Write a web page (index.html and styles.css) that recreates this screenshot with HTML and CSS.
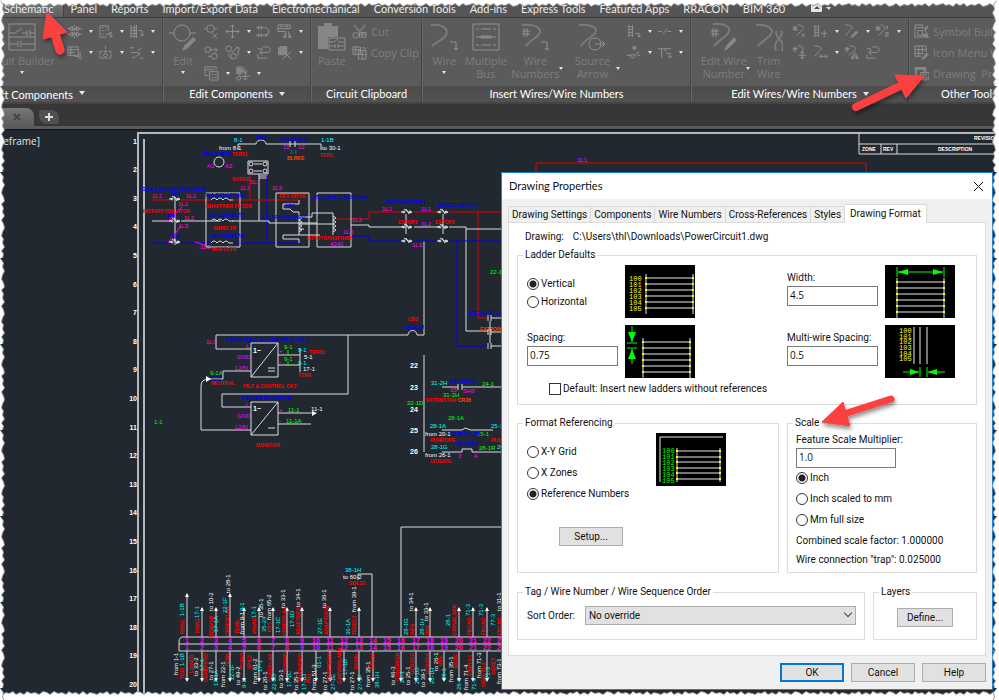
FILE: index.html
```html
<!DOCTYPE html>
<html lang="en">
<head>
<meta charset="utf-8">
<title>Drawing Properties</title>
<link rel="stylesheet" href="styles.css">
</head>
<body>
<svg class="defs" aria-hidden="true">
  <defs>
    <symbol id="i-builder" viewBox="0 0 28 28"><path d="M1 1h26v26H1zM1 14h26M1 10h6l7-5M14 10h5M19 7v6M22 7v6M22 10h5M1 21h8M10 18v6M13 18v6M14 21h13"/></symbol>
    <symbol id="i-comp" viewBox="0 0 16 16"><path d="M0 5h5M11 5h5M0 11h5M11 11h5M6 3v4M10 3v4M6 9v4M10 9v4M8 1v2M8 5v2M8 9v2M8 13v2"/><circle cx="5" cy="5" r="2"/><circle cx="11" cy="5" r="2"/><circle cx="5" cy="11" r="2"/><circle cx="11" cy="11" r="2"/></symbol>
    <symbol id="i-panel" viewBox="0 0 16 16"><path d="M2 2h9v5M2 2v12h7M4 4h2M8 4h1M4 7h2M8 7h1M4 11h2M8 11h4V9h2v5M12 12l2 2 2-2"/></symbol>
    <symbol id="i-rail" viewBox="0 0 16 16"><path d="M2 1v14M6 1v14M8 1v14M2 4h6M2 7h6M2 10h6M2 13h6M10 7h4v6M12 11l2 2 2-2"/></symbol>
    <symbol id="i-table" viewBox="0 0 16 16"><path d="M1 2h11v9H1zM1 5h11M1 8h7M4 2v9M8 12h6V7M11 12l3 3 2-3"/></symbol>
    <symbol id="i-loc" viewBox="0 0 16 16"><path d="M2 7v7h12V7M2 7h3M11 7h3M8 1v7M6 6l2 2 2-2" stroke-dasharray="3 1"/><circle cx="8" cy="11" r="2"/></symbol>
    <symbol id="i-contact" viewBox="0 0 16 16"><path d="M1 3h5M9 6l5-3M5 8h6v3M3 13h4l3-3M12 14h3M2 8h3" stroke-dasharray="4 1"/></symbol>
    <symbol id="i-edit" viewBox="0 0 28 28"><circle cx="13" cy="10" r="8"/><path d="M0 10h5M21 10h6"/><path class="solid" d="M24 14l3 3-9 9-5 2 2-5z"/></symbol>
    <symbol id="i-del" viewBox="0 0 16 16"><circle cx="7" cy="5" r="4"/><path d="M0 5h3M11 5h3M9 10l5 5M14 10l-5 5"/></symbol>
    <symbol id="i-move" viewBox="0 0 16 16"><path d="M8 1v14M1 8h14M6 3l2-2 2 2M6 13l2 2 2-2M3 6L1 8l2 2M13 6l2 2-2 2"/></symbol>
    <symbol id="i-scoot" viewBox="0 0 16 16"><path d="M0 4h8M0 12h10M3 2v4M6 2v4M3 10v4M6 10v4M9 4c6 0 6 8 1 8M12 10l-2 2 2 2"/></symbol>
    <symbol id="i-align" viewBox="0 0 16 16"><path d="M1 1h13v4H1zM1 8h8M3 3h3M8 3h4M1 5v3"/><path class="solid" d="M6 15l4-8v8zM12 7l4 8h-4z"/></symbol>
    <symbol id="i-copy" viewBox="0 0 16 16"><circle cx="4" cy="5" r="3"/><circle cx="11" cy="12" r="3"/><path d="M7 5h7M12 3l2 2-2 3M4 12h4"/></symbol>
    <symbol id="i-swap" viewBox="0 0 16 16"><circle cx="4" cy="4" r="3"/><circle cx="9" cy="12" r="3"/><path d="M7 8l7-6M14 6v5M12 3h3v3M4 9c0 4 2 5 3 5"/></symbol>
    <symbol id="i-back" viewBox="0 0 16 16"><path d="M7 2h5c4 0 4 6 0 6H5M7 5L4 8l3 3M2 10v4h10M2 4h4v2"/></symbol>
    <symbol id="i-tools" viewBox="0 0 16 16"><path class="solid" d="M1 3l3-2h7v8l-2 2H1z"/><path d="M6 15l9-8M8 8l7 7"/></symbol>
    <symbol id="i-list" viewBox="0 0 16 16"><path d="M1 1h12v3M1 1v9h4M1 4h10M6 6h9v9H6zM8 9h2M11 9h3M8 12h2M11 12h3"/></symbol>
    <symbol id="i-tag" viewBox="0 0 16 16"><path d="M2 1h6l5 5M2 1v8M5 4h3l3 3"/><path class="solid" d="M2 2h5l3 3-5 5-3-2z"/><path d="M11 6v9M6 11h10M9 8l2-2 2 2M9 13l2 2 2-2"/><circle cx="4" cy="13" r="2"/></symbol>
    <symbol id="i-paste" viewBox="0 0 28 28"><path class="solid" d="M0 3h6V0h8v3h6v11H10v12H0z"/><path d="M11 15h16v12H11zM11 19h5l4-3M20 19h7M11 23h6M17 21v4M20 21v4M20 23h7"/></symbol>
    <symbol id="i-cut" viewBox="0 0 16 16"><path class="thick" d="M2 1l6 7M14 1L8 8"/><circle cx="4" cy="12" r="3"/><path d="M8 9h7v5H8zM8 11h7M11 9v5"/></symbol>
    <symbol id="i-clip" viewBox="0 0 16 16"><path d="M1 2h8v8H1zM1 5h8M4 2v8M7 6h8v9H7zM7 10h8M11 6v9M11 3h3v3"/></symbol>
    <symbol id="i-wire" viewBox="0 0 28 28"><path class="thick" d="M1 2c12-1 18 4 15 10-2 4-8 6-14 11"/><path d="M20 19h6v8M24 25l2 2 2-2"/></symbol>
    <symbol id="i-bus" viewBox="0 0 28 28"><path d="M1 1h26v26H1zM4 6h3M9 6h10M21 6h3M4 14h20M4 22h3M9 22h10M21 22h3"/><path d="M9 13h10v2H9z"/></symbol>
    <symbol id="i-wirenum" viewBox="0 0 28 28"><path d="M3 5v9M6 5v9M1 8h8M1 11h8M20 19h6v8M24 25l2 2 2-2"/><path class="thick" d="M1 2c14-1 21 4 17 9-2 4-9 6-13 12"/></symbol>
    <symbol id="i-source" viewBox="0 0 28 28"><path class="thick" d="M1 2c12-1 20 3 16 8-2 4-10 6-14 13"/><circle cx="17" cy="21" r="6"/><path d="M17 21h10M24 18l3 3-3 3"/></symbol>
    <symbol id="i-ladder" viewBox="0 0 16 16"><path d="M3 1v13M7 1v13M3 3h4M3 6h4M3 9h4M3 12h4M10 10h4v4M12 12l2 2 2-2"/></symbol>
    <symbol id="i-gap" viewBox="0 0 16 16"><path d="M1 8h4M6 11l5-6M11 8h4"/></symbol>
    <symbol id="i-tee" viewBox="0 0 16 16"><path d="M1 4h14M5 4v10M9 4v3M10 9h4v5M12 12l2 2 2-2"/></symbol>
    <symbol id="i-node" viewBox="0 0 16 16"><path class="solid" d="M7 1h4v4H7z"/><path d="M1 11h4M9 11l5-4M12 11h3"/><circle cx="7" cy="12" r="2"/></symbol>
    <symbol id="i-editnum" viewBox="0 0 28 28"><path d="M3 5v9M6 5v9M1 8h8M1 11h8"/><path class="thick" d="M3 1c13-1 19 4 15 9-2 4-8 6-14 13"/><path class="solid" d="M24 14l3 3-9 9-4 2 2-5z"/></symbol>
    <symbol id="i-trim" viewBox="0 0 28 28"><path class="thick" d="M1 2c12-1 18 4 15 9-2 4-8 6-13 12M22 8c-3 3 1 4 2 9M26 8c3 3-1 4-2 9M24 16c-5 4-4 8-3 12M24 16c5 4 4 8 3 12"/></symbol>
    <symbol id="i-numx" viewBox="0 0 16 16"><path d="M2 2v5M4 2v5M1 4h5M1 6h5M6 1c8 0 7 5 3 7l-4 4M10 10l4 4M14 10l-4 4"/></symbol>
    <symbol id="i-numseq" viewBox="0 0 16 16"><path d="M2 2v5M4 2v5M1 4h5M1 6h5M6 1c6 0 6 5 2 7l-4 4M12 3l1-1v4M11 9h3v2h-3v2h4"/></symbol>
    <symbol id="i-ladplus" viewBox="0 0 16 16"><path d="M2 1v13M6 1v13M2 3h4M2 6h4M2 9h4M2 12h4M8 10h7M12 7v7"/></symbol>
    <symbol id="i-wedit" viewBox="0 0 16 16"><path d="M1 1c9 0 9 4 5 6l-4 5"/><path class="solid" d="M13 7l2 2-5 5-3 1 1-3z"/></symbol>
    <symbol id="i-nummove" viewBox="0 0 16 16"><path d="M2 2v5M4 2v5M1 4h5M6 1c8 0 7 5 3 7M11 7v8M7 11h8M9 9l2-2 2 2M9 13l2 2 2-2"/></symbol>
    <symbol id="i-wstretch" viewBox="0 0 16 16"><path d="M1 1c9 0 9 4 5 6l-4 5M7 12h8M9 10l-2 2 2 2M13 10l2 2-2 2"/></symbol>
    <symbol id="i-numflip" viewBox="0 0 16 16"><path d="M2 2v5M4 2v5M1 4h5M6 1c8 0 7 5 3 7l-4 3"/><path class="solid" d="M7 15l4-8v8zM12 7l4 8h-4z"/></symbol>
    <symbol id="i-symbol" viewBox="0 0 16 16"><path d="M1 1h8v3M1 1v13h8M1 4h8M4 7h5v5H4zM10 4l4 6M14 2l1 3M11 14h5"/><path class="solid" d="M9 10h6v4H9zM11 3h3v3h-3z"/></symbol>
    <symbol id="i-menu" viewBox="0 0 16 16"><path d="M1 1h12v7M1 1v11h7M1 5h12M1 9h9M5 1v11M9 1v9"/><path class="solid" d="M13 8l3 2-5 5-3 1 1-3z"/></symbol>
    <symbol id="i-props" viewBox="0 0 16 16"><path class="solid" d="M1 1h12v5h-3V4H3v10H1z"/><path d="M7 7h9v7H7zM9 9h5M9 12h5M9 15h5"/></symbol>

    <g id="rungs"><path d="M0 0v40M47 0v40M0 4h47M0 10h47M0 16h47M0 22h47M0 28h47M0 34h47" stroke="#e8e8e8" fill="none"/><path d="M0 3v2M0 9v2M0 15v2M0 21v2M0 27v2M0 33v2M47 3v2M47 9v2M47 15v2M47 21v2M47 27v2M47 33v2" stroke="#ff0" stroke-width="2"/></g>
    <g id="nc"><path class="w" d="M0 0h3M8 0h3M3-3l6 4M5-3l3 5M1-1l2 2M9-1l2 2"/><circle cx="3" r="1" class="w"/><circle cx="9" r="1" class="w"/></g>

    <pattern id="tear-h" width="94" height="10" patternUnits="userSpaceOnUse"><path fill="#999" d="M0 0H94V5L90 6 87 4 83 7 79 4 76 6 72 5 69 7 66 4 62 6 58 5 54 7 50 4 47 6 43 7 39 4 35 6 31 5 27 7 24 4 20 6 16 4 13 7 9 5 6 6 3 4 0 5z"/><path fill="#fff" d="M0 0H94V4L90 5 87 3 83 6 79 3 76 5 72 4 69 6 66 3 62 5 58 4 54 6 50 3 47 5 43 6 39 3 35 5 31 4 27 6 24 3 20 5 16 3 13 6 9 4 6 5 3 3 0 4z"/></pattern>
    <pattern id="tear-v" width="10" height="86" patternUnits="userSpaceOnUse"><path fill="#999" d="M0 0V86H3L4 82 2 79 5 75 3 71 4 67 2 64 3 60 5 56 4 52 2 48 5 44 3 40 4 36 2 32 5 29 4 25 2 21 3 17 5 13 3 9 4 5 2 2z"/><path fill="#fff" d="M0 0V86H2L3 82 1 79 4 75 2 71 3 67 1 64 2 60 4 56 3 52 1 48 4 44 2 40 3 36 1 32 4 29 3 25 1 21 2 17 4 13 2 9 3 5 1 2z"/></pattern>
    <filter id="soft" x="-30%" y="-30%" width="160%" height="160%"><feDropShadow dx="1" dy="3" stdDeviation="2" flood-color="#000" flood-opacity=".45"/></filter>
  </defs>
</svg>

<div class="app">
  <nav class="tabs">
    <a class="tab current" href="#">Schematic</a><a class="tab" href="#">Panel</a><a class="tab" href="#">Reports</a><a class="tab" href="#">Import/Export Data</a><a class="tab" href="#">Electromechanical</a><a class="tab" href="#">Conversion Tools</a><a class="tab" href="#">Add-ins</a><a class="tab" href="#">Express Tools</a><a class="tab" href="#">Featured Apps</a><a class="tab" href="#">RRACON</a><a class="tab" href="#">BIM 360</a>
    <button class="ribbon-toggle" aria-label="Minimize ribbon"><svg width="20" height="8" viewBox="0 0 20 8"><rect width="11" height="8" rx="1" fill="#e4e4e4"/><path d="M3 5l3-3 3 3z" fill="#555"/><path d="M15 3h5l-2 3z" fill="#ddd"/></svg></button>
  </nav>

  <div class="ribbon">
    <section class="panel">
      <div class="tools">
        <button class="big cut-left"><svg class="icon-l"><use href="#i-builder"/></svg><span>Circuit Builder</span><i class="caret"></i></button>
        <div class="smalls">
          <div><button class="sm" aria-label="Icon menu"><svg><use href="#i-comp"/></svg><i class="caret"></i></button><button class="sm" aria-label="Panel list"><svg><use href="#i-panel"/></svg><i class="caret"></i></button><button class="sm" aria-label="Terminal"><svg><use href="#i-rail"/></svg><i class="caret"></i></button></div>
          <div><button class="sm" aria-label="PLC"><svg><use href="#i-table"/></svg><i class="caret"></i></button><button class="sm" aria-label="Location"><svg><use href="#i-loc"/></svg><i class="caret"></i></button><button class="sm" aria-label="Multiple insert"><svg><use href="#i-contact"/></svg><i class="caret"></i></button></div>
        </div>
      </div>
      <h2 class="first">Insert Components<i class="caret wide"></i></h2>
    </section>
    <section class="panel">
      <div class="tools">
        <button class="big"><svg class="icon-l"><use href="#i-edit"/></svg><span>Edit</span><i class="caret"></i></button>
        <div class="smalls">
          <div><button class="sm bare" aria-label="Delete"><svg><use href="#i-del"/></svg></button><button class="sm" aria-label="Move"><svg><use href="#i-move"/></svg><i class="caret"></i></button><button class="sm bare" aria-label="Scoot"><svg><use href="#i-scoot"/></svg></button><button class="sm" aria-label="Align"><svg><use href="#i-align"/></svg><i class="caret"></i></button></div>
          <div><button class="sm bare" aria-label="Copy"><svg><use href="#i-copy"/></svg></button><button class="sm" aria-label="Swap"><svg><use href="#i-swap"/></svg><i class="caret"></i></button><button class="sm bare" aria-label="Reverse"><svg><use href="#i-back"/></svg></button><button class="sm" aria-label="Utilities"><svg><use href="#i-tools"/></svg><i class="caret"></i></button></div>
          <div><button class="sm" aria-label="Catalog"><svg><use href="#i-list"/></svg><i class="caret"></i></button><button class="sm" aria-label="Attributes"><svg><use href="#i-tag"/></svg><i class="caret"></i></button></div>
        </div>
      </div>
      <h2>Edit Components<i class="caret wide"></i></h2>
    </section>
    <section class="panel">
      <div class="tools">
        <button class="big narrow"><svg class="icon-l"><use href="#i-paste"/></svg><span>Paste</span></button>
        <div class="rows"><button class="row"><svg><use href="#i-cut"/></svg>Cut</button><button class="row"><svg><use href="#i-clip"/></svg>Copy Clip</button></div>
      </div>
      <h2>Circuit Clipboard</h2>
    </section>
    <section class="panel">
      <div class="tools">
        <button class="big"><svg class="icon-l"><use href="#i-wire"/></svg><span>Wire</span><i class="caret"></i></button>
        <button class="big"><svg class="icon-l"><use href="#i-bus"/></svg><span>Multiple<br>Bus</span></button>
        <button class="big mid"><svg class="icon-l"><use href="#i-wirenum"/></svg><span>Wire<br>Numbers</span><i class="caret side"></i></button>
        <button class="big mid"><svg class="icon-l"><use href="#i-source"/></svg><span>Source<br>Arrow</span><i class="caret side"></i></button>
        <div class="smalls">
          <div><button class="sm" aria-label="Ladder"><svg><use href="#i-ladder"/></svg><i class="caret"></i></button><button class="sm" aria-label="Gap"><svg><use href="#i-gap"/></svg><i class="caret"></i></button></div>
          <div><button class="sm" aria-label="Node"><svg><use href="#i-node"/></svg><i class="caret"></i></button><button class="sm" aria-label="Tee"><svg><use href="#i-tee"/></svg><i class="caret"></i></button></div>
        </div>
      </div>
      <h2>Insert Wires/Wire Numbers</h2>
    </section>
    <section class="panel">
      <div class="tools">
        <button class="big mid"><svg class="icon-l"><use href="#i-editnum"/></svg><span>Edit Wire<br>Number</span><i class="caret side"></i></button>
        <button class="big slim"><svg class="icon-l"><use href="#i-trim"/></svg><span>Trim<br>Wire</span></button>
        <div class="smalls">
          <div><button class="sm bare" aria-label="Delete numbers"><svg><use href="#i-numx"/></svg></button><button class="sm" aria-label="Revise ladder"><svg><use href="#i-ladplus"/></svg><i class="caret"></i></button><button class="sm" aria-label="Edit wire"><svg><use href="#i-wedit"/></svg><i class="caret"></i></button><button class="sm" aria-label="Wire sequence"><svg><use href="#i-numseq"/></svg><i class="caret"></i></button></div>
          <div><button class="sm bare" aria-label="Move number"><svg><use href="#i-nummove"/></svg></button><button class="sm" aria-label="Stretch wire"><svg><use href="#i-wstretch"/></svg><i class="caret"></i></button><button class="sm bare" aria-label="Flip number"><svg><use href="#i-numflip"/></svg></button><button class="sm bare" aria-label="Toggle"><svg><use href="#i-back"/></svg></button></div>
        </div>
      </div>
      <h2>Edit Wires/Wire Numbers<i class="caret wide"></i></h2>
    </section>
    <section class="panel">
      <div class="tools">
        <div class="rows"><button class="row"><svg><use href="#i-symbol"/></svg>Symbol Builder</button><button class="row"><svg><use href="#i-menu"/></svg>Icon Menu Wizard</button><button class="row"><svg><use href="#i-props"/></svg>Drawing&nbsp; Properties</button></div>
      </div>
      <h2 class="last">Other Tools</h2>
    </section>
  </div>

  <div class="files">
    <div class="file"><button aria-label="Close drawing"><svg width="8" height="8" viewBox="0 0 8 8"><path d="M1 1l6 6M7 1L1 7" stroke="#444" stroke-width="2"/></svg></button></div>
    <button class="add" aria-label="New drawing"><svg width="8" height="8" viewBox="0 0 8 8"><path d="M4 0v8M0 4h8" stroke="#ddd" stroke-width="2"/></svg></button>
  </div>

  <main class="canvas">
    <span class="view-label">[-][Top][2D Wireframe]</span>
    <svg class="drawing" id="drawing">
      <g id="sheet" transform="translate(0 -129)">
        <path class="frame" d="M138 700V133H1200M144 700V139"/>
        <path class="w" d="M859 133V154H1200M859 144H1200M881 144V154M897 144V154"/>
        <g class="t5 white"><text x="974" y="140">REVISIONS</text><text x="862" y="151">ZONE</text><text x="883" y="151">REV</text><text x="938" y="151">DESCRIPTION</text></g>

        <!-- control breaker -->
        <path class="w" d="M238 144h18a5 4 0 0 1 10 0h55M238 144v6M321 144v6M290 141v6M295 141v6"/>
        <g class="t6 cyan"><text x="234" y="142">8-1</text><text x="321" y="142">1-1B</text></g>
        <g class="t6 white"><text x="219" y="150">from 8-1</text><text x="322" y="150">to 30-1</text></g>
        <g class="t5 red"><text x="232" y="156">TER31</text><text x="320" y="157">TER1</text></g>
        <g class="t5 blue"><text x="256" y="140">CB1</text><text x="279" y="141">CR2-SURGE</text><text x="202" y="156">CR2-SURGE</text><text x="142" y="191">DISC3-ROTARY ISOLATOR</text></g>
        <text class="t5 orange" x="287" y="160">BLRKE</text><text class="t5 teal" x="290" y="154">2-1</text>
        <g class="t6 magenta"><text x="283" y="149">11</text><text x="298" y="149">12</text><text x="207" y="168">A1</text><text x="225" y="168">A2</text></g>
        <circle class="w" cx="219" cy="162" r="5"/>

        <!-- surge unit -->
        <path class="w" d="M248 161h20v13h-20zM254 164h8M254 171h8M259 174v47M259 176h8v-3M259 178h8"/>
        <g class="w"><circle cx="251" cy="164" r="2"/><circle cx="265" cy="164" r="2"/><circle cx="251" cy="171" r="2"/><circle cx="265" cy="171" r="2"/></g>
        <path class="r" d="M250 174v26"/><path class="b" d="M267 174v69"/>
        <text class="t5 red" x="232" y="181">SURGE</text>
        <g class="t6 magenta"><text x="240" y="190">1L1</text><text x="250" y="184">1L2</text><text x="272" y="190">1L3</text><text x="152" y="198">1L1</text><text x="186" y="198">1L1</text><text x="178" y="206">1L2</text><text x="184" y="220">1L2</text><text x="178" y="228">1L3</text><text x="200" y="249">1L3</text></g>

        <!-- supply lines -->
        <path class="r" d="M152 200h18M181 200h30M233 200h66M337 219h32v-7h34M414 212h25M449 212h52M478 212v106h10"/>
        <path class="w" d="M152 221h18M181 221h40M232 221h37v2h48M351 225h18v2h34M414 227h25M449 227h17v104h22M466 229h35M424 241v94"/>
        <path class="b" d="M152 243h18M181 243h33M233 243h66M337 236h32v5h34M414 241h25M449 241h52M457 241v105h31"/>
        <path class="w" d="M211 200q3-4 6 0q3-4 6 0q3-4 6 0h4M211 221q3-4 6 0q3-4 6 0q3-4 6 0h4M211 243q3-4 6 0q3-4 6 0q3-4 6 0h4M175 197v48"/>
        <path class="m" d="M168 221l14-14M168 243l13-17M195 242l10 3"/>
        <use href="#nc" x="169" y="199"/><use href="#nc" x="169" y="221"/><use href="#nc" x="169" y="242"/>
        <path class="w" d="M206 193h34v54h-34zM276 193h33v54h-33zM317 193h34v54h-34z"/>
        <path class="w" d="M299 200v4h-16v5h7l3 3h6v23h-16v4h16v4M299 217h13v-4h21M299 224h34M299 235h21M299 229h5M333 213v22M333 216l3 2-3 2 3 2-3 2 3 2-3 2 3 2-3 2M299 216l3 2-3 2 3 2-3 2 3 2-3 2 3 2-3 2"/>
        <g class="t5 blue"><text x="171" y="196">30A</text><text x="166" y="217">30A</text><text x="171" y="238">30A</text><text x="205" y="197">FL1-SCHAFFNER</text><text x="209" y="217">X6-CONNFLTR</text><text x="209" y="238">X6-CONNFLTR</text><text x="261" y="219">ATC1-PHPH 300HZ</text><text x="285" y="208">ATC</text><text x="312" y="199">ATC4-AUTOTRNSFRMR</text></g>
        <g class="t5 red"><text x="206" y="208">SHAFFNER FILTER</text><text x="213" y="230">SHRFLTR</text><text x="211" y="251">WIRFFLTR</text><text x="279" y="198">REV DRIVE</text><text x="143" y="213">ROTARY ISOLATOR</text><text x="306" y="240">AUTOTRANSFORM</text></g>
        <g class="t6 magenta"><text x="352" y="222">1L2</text><text x="343" y="234">1L3</text><text x="382" y="211">1L1</text><text x="421" y="211">1L1</text><text x="421" y="226">1L2</text><text x="412" y="247">1L3</text><text x="577" y="162">1L1</text><text x="330" y="246">4242</text></g>

        <!-- emergency stops -->
        <use href="#nc" x="401" y="212"/><use href="#nc" x="401" y="227"/><use href="#nc" x="401" y="241"/><use href="#nc" x="437" y="212"/><use href="#nc" x="437" y="227"/><use href="#nc" x="437" y="241"/>
        <path class="w" d="M406 214v20M443 214v20"/>
        <g class="t5 blue"><text x="386" y="204">DISC3A-ESTOP1</text><text x="438" y="207">DISC22-ESTOP2</text><text x="468" y="315">ATC28-CXT22</text><text x="403" y="329">CXCCSR</text></g>
        <g class="t5 red"><text x="398" y="224">ESTOP1</text><text x="435" y="224">ESTOP2</text><text x="408" y="321">CB3</text></g>
        <text class="t5 orange" x="480" y="331">EXTPOINT</text>
        <path class="r" d="M536 172v-9h330v10"/>
        <text class="t6 green" x="490" y="274">22-1</text>
        <path class="w" d="M488 315v6M491 315v6M488 329v6M491 329v6M488 343v6M491 343v6M491 318h10M491 332h10M491 346h10M490 321v22"/>

        <!-- power supplies -->
        <path class="w" d="M424 335h-7a4 4 0 0 0-9 0H216v14h35M348 335v59H222v13h29M251 371h-28v8h-14q-8 0-8 7v44h50M251 343h27v34h-27zM278 343l-27 34M251 402h27v33h-27zM278 402l-27 33M268 368h7M268 371h7M268 428h7M278 355h22M278 365h22M300 348v24M278 413h34M278 424h33"/>
        <path class="white" d="M312 411l5 2-5 3zM206 376l5 3-5 3z"/>
        <path class="b" d="M211 377h10M211 380h10"/>
        <g class="t6 blue"><text x="225" y="341">PWS9-PILZ &amp; CONTROL CKT</text><text x="241" y="400">PWS10-MONITOR</text></g>
        <g class="t6 magenta"><text x="206" y="344">1L3</text><text x="246" y="348">L</text><text x="237" y="359">GND</text><text x="235" y="370">L2/N</text><text x="246" y="407">L</text><text x="237" y="418">GND</text><text x="235" y="429">L2/N</text><text x="279" y="353">+</text><text x="279" y="364">-</text><text x="279" y="412">+</text><text x="279" y="423">-</text></g>
        <g class="t6 green"><text x="284" y="349">9-1</text><text x="284" y="361">9-1</text><text x="210" y="375">9-1A</text><text x="154" y="424">1-1</text><text x="288" y="412">11-1</text><text x="286" y="423">11-1A</text></g>
        <path class="g" d="M288 350v5M288 361v5"/>
        <g class="t6 cyan"><text x="298" y="352">9-1</text><text x="298" y="365">9-1</text></g>
        <g class="t6 white"><text x="304" y="359">5-1</text><text x="303" y="371">17-1</text><text x="311" y="411">11-1</text></g>
        <g class="t7 white"><text x="253" y="353">1~</text><text x="253" y="411">1~</text></g>
        <g class="t5 red"><text x="309" y="354">TER31</text><text x="298" y="377">TER9</text><text x="211" y="385">NEUTRAL</text><text x="243" y="388">PILZ &amp; CONTROL CKT</text><text x="256" y="447">MONITOR</text></g>

        <!-- right-hand ladder -->
        <path class="w" d="M424 355v97M442 387h16M462 387h39M458 384v6M462 384v6M442 430h20l3-2 6 2h22M442 452h20v-3h10v3h29"/>
        <g class="t7 white"><text x="410" y="368">22</text><text x="410" y="390">23</text><text x="410" y="412">24</text><text x="410" y="433">25</text><text x="410" y="454">26</text></g>
        <g class="t6 cyan"><text x="431" y="385">31-2H</text><text x="430" y="428">28-1A</text><text x="431" y="449">28-1G</text><text x="491" y="428">25-1</text><text x="497" y="449">26</text></g>
        <g class="t6 green"><text x="482" y="386">24-1</text><text x="443" y="397">31-2H</text><text x="407" y="405">22-1D</text><text x="448" y="420">28-1A</text><text x="477" y="436">25-1</text><text x="479" y="450">28-1R</text></g>
        <g class="t5 blue"><text x="449" y="383">EXTERNAL</text><text x="449" y="436">UCNROLLER</text><text x="456" y="446">UCNJOG</text></g>
        <g class="t6 magenta"><text x="450" y="392">15</text><text x="463" y="393">SH3</text><text x="458" y="458">3</text><text x="474" y="458">4</text></g>
        <g class="t6 white"><text x="425" y="436">from 20-1</text><text x="425" y="457">from 26-1</text></g>
        <g class="t5 red"><text x="426" y="402">EXTRNSTAN</text><text x="430" y="442">RUNROPE</text><text x="430" y="463">UCNJOG</text><text x="491" y="442">RUN</text></g>
        <text class="t5 orange" x="458" y="402">CR28</text>

        <!-- terminal strip -->
        <path class="w" d="M1200 637H183q-4 0-4 5v9H1200M179 644H1200M372 637v-63h-14v6M401 637v-110H1200"/>
        <text class="t6 cyan" x="345" y="572">38-1H</text><text class="t6 white" x="343" y="579">to 60-2</text><text class="t5 red" x="349" y="585">SOLS1</text>
      </g>
    </svg>

    <form class="dialog" role="dialog" aria-labelledby="dlg-title">
      <header><h1 id="dlg-title">Drawing Properties</h1><button type="button" class="close" aria-label="Close"><svg width="9" height="9" viewBox="0 0 9 9"><path d="M0 0l9 9M9 0L0 9" stroke="#111"/></svg></button></header>
      <div class="dlg-tabs" role="tablist"><button type="button" role="tab">Drawing Settings</button><button type="button" role="tab">Components</button><button type="button" role="tab">Wire Numbers</button><button type="button" role="tab">Cross-References</button><button type="button" role="tab">Styles</button><button type="button" role="tab" aria-selected="true" class="on">Drawing Format</button></div>
      <div class="page">
        <p class="path"><span>Drawing:</span><span>C:\Users\thl\Downloads\PowerCircuit1.dwg</span></p>
        <fieldset class="ladder">
          <legend>Ladder Defaults</legend>
          <div class="ladder-grid">
            <div class="dirs"><label><input type="radio" name="dir" checked>Vertical</label><label><input type="radio" name="dir">Horizontal</label></div>
            <svg class="thumb" viewBox="0 0 70 53"><rect width="70" height="53"/><use href="#rungs" x="21" y="9"/><g class="nums"><text x="4" y="16">100</text><text x="4" y="22">101</text><text x="4" y="28">102</text><text x="4" y="34">103</text><text x="4" y="40">104</text><text x="4" y="46">105</text></g></svg>
            <span></span>
            <div class="field"><label for="width">Width:</label><input id="width" type="text" value="4.5"></div>
            <svg class="thumb" viewBox="0 0 70 53"><rect width="70" height="53"/><use href="#rungs" x="12" y="13"/><path class="gl" d="M12 2v10M59 2v10M13 7h45"/><path class="gf" d="M13 7l10-3v6zM58 7l-10-3v6z"/></svg>
            <div class="field"><label for="spacing">Spacing:</label><input id="spacing" type="text" value="0.75"></div>
            <svg class="thumb" viewBox="0 0 70 53"><rect width="70" height="53"/><use href="#rungs" x="18" y="13"/><path class="gl" d="M7 1v16M2 18h10M2 23h10M7 24v15"/><path class="gf" d="M7 17L3 7h8zM7 24l-4 10h8z"/></svg>
            <span></span>
            <div class="field"><label for="multi">Multi-wire Spacing:</label><input id="multi" type="text" value="0.5"></div>
            <svg class="thumb" viewBox="0 0 70 53"><rect width="70" height="53"/><path d="M29 2v37M35 2v37M42 2v37" stroke="#e8e8e8"/><g class="nums"><text x="14" y="8">100</text><text x="14" y="14">101</text><text x="14" y="19">102</text><text x="14" y="25">103</text><text x="14" y="31">104</text><text x="14" y="36">105</text></g><path class="gl" d="M35 42v10M42 42v10M18 47h16M43 47h17"/><path class="gf" d="M34 47l-9-3v6zM43 47l9-3v6z"/></svg>
          </div>
          <label class="check"><input type="checkbox">Default: Insert new ladders without references</label>
        </fieldset>
        <div class="pair">
          <fieldset class="format">
            <legend>Format Referencing</legend>
            <div class="format-top">
              <div class="radios"><label><input type="radio" name="ref">X-Y Grid</label><label><input type="radio" name="ref">X Zones</label><label><input type="radio" name="ref" checked>Reference Numbers</label></div>
              <svg class="thumb" viewBox="0 0 70 53"><rect width="70" height="53"/><path d="M4 49V4h63" stroke="#e8e8e8" fill="none"/><path d="M21 15v34M64 15v34M21 18h43M21 24h43M21 29h43M21 35h43M21 40h43M21 46h43" stroke="#e8e8e8"/><path d="M21 17v2M21 23v2M21 28v2M21 34v2M21 39v2M21 45v2M64 17v2M64 23v2M64 28v2M64 34v2M64 39v2M64 45v2" stroke="#ff0" stroke-width="2"/><g class="nums lime"><text x="6" y="20">100</text><text x="6" y="26">101</text><text x="6" y="32">102</text><text x="6" y="38">103</text><text x="6" y="44">104</text><text x="6" y="50">105</text></g></svg>
            </div>
            <button type="button" class="btn setup">Setup...</button>
          </fieldset>
          <fieldset class="scale">
            <legend>Scale</legend>
            <div class="field"><label for="mult">Feature Scale Multiplier:</label><input id="mult" type="text" value="1.0"></div>
            <div class="radios"><label><input type="radio" name="unit" checked>Inch</label><label><input type="radio" name="unit">Inch scaled to mm</label><label><input type="radio" name="unit">Mm full size</label></div>
            <p>Combined scale factor: 1.000000</p>
            <p>Wire connection "trap": 0.025000</p>
          </fieldset>
        </div>
        <div class="pair bottom">
          <fieldset>
            <legend>Tag / Wire Number / Wire Sequence Order</legend>
            <div class="sort"><label for="sort">Sort Order:</label><span class="select"><select id="sort"><option>No override</option></select></span></div>
          </fieldset>
          <fieldset class="layers"><legend>Layers</legend><button type="button" class="btn define">Define...</button></fieldset>
        </div>
      </div>
      <footer><button type="button" class="btn ok">OK</button><button type="button" class="btn">Cancel</button><button type="button" class="btn">Help</button></footer>
    </form>
  </main>

  <svg class="arrows" aria-hidden="true">
    <g filter="url(#soft)" fill="#fb4141" stroke="#fb4141">
      <path d="M55 34l5 16" stroke-width="9" stroke-linecap="round"/><path d="M47 12l20 20-24 7z"/>
      <path d="M856 107l42-20" stroke-width="8" stroke-linecap="round"/><path d="M924 76l-29-1 11 23z"/>
      <path d="M891 399l-44 14" stroke-width="7" stroke-linecap="round"/><path d="M822 422l21-20 7 24z"/>
    </g>
  </svg>
  <svg class="tear top"><rect width="100%" height="10" fill="url(#tear-h)"/></svg>
  <svg class="tear bot"><rect width="100%" height="10" fill="url(#tear-h)"/></svg>
  <svg class="tear left"><rect width="10" height="100%" fill="url(#tear-v)"/></svg>
  <svg class="tear right"><rect width="10" height="100%" fill="url(#tear-v)"/></svg>
</div>
<script src="drawing.js"></script>
</body>
</html>
```

FILE: styles.css
```css
* { box-sizing: border-box; }
html, body { height: 100%; }
body { margin: 0; background: #fff; font-family: "Open Sans", "Noto Sans", sans-serif; font-size: 11px; overflow: hidden; }
button { font: inherit; color: inherit; background: none; border: 0; padding: 0; margin: 0; }
h1, h2, p { margin: 0; font-weight: normal; }
.defs { position: absolute; width: 0; height: 0; }

.app { position: relative; min-height: 100vh; display: flex; flex-direction: column; overflow: hidden; background: #212830; }

/* ribbon */
.tabs { display: flex; height: 18px; background: #555; border-bottom: 1px solid #3c3c3c; color: #ececec; white-space: nowrap; font-family: Lato, "Open Sans", sans-serif; }
.tab { color: inherit; text-decoration: none; line-height: 18px; padding: 0 7px; }
.tab.current { background: linear-gradient(#777, #606060); padding: 0 9px 0 4px; border-right: 1px solid #444; }
.ribbon-toggle { margin: 4px 0 0 19px; line-height: 0; align-self: flex-start; }
.ribbon { display: grid; grid-template-columns: 163px 148px 111px 269px 218px 1fr; height: 86px; background: #5b5b5b; border-bottom: 2px solid #444; }
.panel { display: flex; flex-direction: column; min-width: 0; overflow: hidden; border-right: 1px solid #444; border-left: 1px solid #666; }
.tools { flex: 1; display: flex; padding: 5px 2px 0; color: #7e7e7e; white-space: nowrap; }
.panel h2 { height: 16px; line-height: 15px; font-family: Lato, "Open Sans", sans-serif; font-size: 11px; text-align: center; color: #fff; background: linear-gradient(#4c4c4c, #525252); white-space: nowrap; }
.panel h2.first { display: flex; justify-content: flex-end; align-items: center; padding-right: 77px; }
.panel h2.last { text-align: left; padding-left: 31px; }
.tools svg { fill: none; stroke: #929292; stroke-width: 1; overflow: visible; }
.solid { fill: #868686; stroke: none; }
.thick { stroke-width: 2; stroke: #7b7b7b; }
.icon-l { width: 28px; height: 28px; }
.big { display: flex; flex-direction: column; align-items: center; width: 40px; position: relative; line-height: 13px; }
.big .icon-l { margin-bottom: 3px; flex: none; }
.big span { text-align: center; }
.big.cut-left { width: 62px; }
.big.cut-left .icon-l { margin-right: 22px; }
.big.cut-left span { margin-left: -29px; }
.big.cut-left .caret { margin-right: 22px; }
.big.narrow { width: 36px; }
.big.mid { width: 57px; }
.big.slim { width: 38px; }
.panel:nth-child(4) .tools { gap: 2px; }
.panel:nth-child(5) .tools { gap: 2px; padding-left: 6px; }
.caret { display: inline-block; width: 0; height: 0; border: 2px solid transparent; border-top: 3px solid #e6e6e6; border-bottom: 0; }
.big .caret { margin-top: 4px; }
.big .caret.side { position: absolute; right: 0; top: 40px; }
.caret.wide { border-width: 3px 3px 0; border-top-width: 4px; margin: 0 0 2px 6px; }
.smalls { padding-left: 4px; }
.smalls > div { display: flex; height: 21px; }
.sm { display: flex; align-items: center; gap: 7px; width: 31px; height: 16px; }
.sm.bare { width: 21px; }
.sm svg, .row svg { width: 15px; height: 15px; flex: none; }
.rows { display: flex; flex-direction: column; gap: 5px; padding-left: 2px; }
.row { display: flex; align-items: center; gap: 4px; height: 16px; }
.panel:last-child { border-right: 0; }

.files { display: flex; gap: 5px; align-items: flex-end; height: 25px; background: #373737; border-bottom: 3px solid #5a5a5a; box-shadow: 0 1px #111; }
.file { width: 34px; height: 18px; border-radius: 0 8px 0 0; background: linear-gradient(#777, #5a5a5a); text-align: center; line-height: 18px; }
.add { width: 20px; height: 14px; margin-bottom: 2px; border-radius: 3px 8px 3px 8px; background: #505050; line-height: 0; }

/* drawing area */
.canvas { position: relative; flex: 1; min-height: 571px; }
.view-label { position: absolute; left: 40px; top: 5px; transform: translateX(-100%); color: #e4e4e4; white-space: nowrap; font-size: 10px; }
.drawing { position: absolute; inset: 0; width: 100%; height: 100%; font-family: "Liberation Sans", sans-serif; }
.frame { fill: none; stroke: #b4b8bc; stroke-width: 2; }
.w, .r, .b, .m, .g { fill: none; stroke: #dcdcdc; stroke-width: 1; }
.r { stroke: #e00000; } .b { stroke: #0000f0; } .m { stroke: #f0f; } .g { stroke: #0e0; }
.t5 { font-size: 5px; } .t6 { font-size: 6px; } .t7 { font-size: 7px; }
.t5, .t7, .blue { font-weight: bold; }
.white { fill: #fff; } .red { fill: #ff0000; } .blue { fill: #0000ff; } .cyan { fill: #00ffff; } .magenta { fill: #ff00ff; } .green { fill: #00ff00; } .orange { fill: #ff4800; } .teal { fill: #008080; }

/* dialog */
.dialog { position: absolute; left: 501px; right: 6px; top: 43px; background: #f0f0f0; border: 1px solid #1883d7; color: #111; font-family: Roboto, "Liberation Sans", sans-serif; font-size: 10px; line-height: 14px; }
.dialog header { display: flex; justify-content: space-between; align-items: center; height: 26px; padding: 0 9px 0 7px; background: #fff; }
.dialog h1 { font-family: Lato, "Open Sans", sans-serif; font-size: 11px; }
.close { line-height: 0; }
.dlg-tabs { display: flex; align-items: flex-end; padding: 5px 6px 0; }
.dlg-tabs button { height: 16px; padding: 0 3px; border: 1px solid #d9d9d9; border-width: 1px 1px 0 0; background: #f0f0f0; white-space: nowrap; }
.dlg-tabs button:first-child { border-left-width: 1px; }
.dlg-tabs .on { height: 19px; margin-bottom: -1px; padding: 0 5px; background: #fff; }
.page { margin: 0 6px; padding: 7px 8px 15px; background: #fff; border: 1px solid #dcdcdc; }
.path { display: flex; gap: 9px; padding-left: 8px; margin-bottom: 4px; }
fieldset { margin: 0; padding: 0; border: 1px solid #dcdcdc; min-width: 0; }
legend { margin-left: 5px; padding: 0 2px; }
.ladder-grid { display: grid; grid-template-columns: 91px 70px 1fr 91px 70px; gap: 7px; padding: 3px 21px 0 9px; }
.thumb { width: 70px; height: 53px; display: block; }
.nums { font: 7px "Liberation Mono", monospace; fill: #ff0; }
.nums.lime { fill: #0f0; }
.gl { stroke: #0f0; fill: none; } .gf { fill: #0f0; }
.field { display: flex; flex-direction: column; padding-top: 6px; }
.dialog input[type="text"] { width: 100%; height: 20px; margin: 1px 0 0; padding: 0 2px 2px; border: 1px solid #7a7a7a; background: #fff; color: #111; font: 10px "Open Sans", sans-serif; }
.dialog label { display: flex; align-items: center; white-space: nowrap; }
.dialog input[type="radio"], .dialog input[type="checkbox"] { appearance: none; width: 12px; height: 12px; margin: 0 2px 0 0; border: 1px solid #333; background: #fff; flex: none; }
.dialog input[type="radio"] { border-radius: 50%; }
.dialog input[type="radio"]:checked { background: radial-gradient(#222 3px, #fff 4px); }
.dirs { display: flex; flex-direction: column; gap: 4px; padding-top: 12px; }
.dialog .check { margin: 4px 0 8px 31px; }
.pair { display: grid; grid-template-columns: 1fr 190px; gap: 8px; margin-top: 11px; }
.format-top { display: flex; gap: 27px; padding: 3px 9px 0; }
.radios { display: flex; flex-direction: column; gap: 7px; }
.format .radios { padding-top: 12px; }
.btn { height: 19px; border: 1px solid #adadad; background: #e1e1e1; width: 64px; }
.setup { display: block; margin: 26px 0 26px 41px; }
.scale { padding-left: 8px; }
.scale legend { margin-left: -3px; }
.scale .field { width: 100px; padding-top: 3px; }
.scale .radios { padding: 3px 0 7px; }
.scale p + p { margin-top: 5px; }
.bottom { grid-template-columns: 1fr 104px; margin-top: 12px; }
.sort { display: flex; align-items: center; gap: 10px; padding: 7px 8px 14px 9px; }
.select { position: relative; flex: 1; }
.select::after { content: ""; position: absolute; right: 5px; top: 4px; width: 5px; height: 5px; border: solid #444; border-width: 0 1px 1px 0; transform: rotate(45deg); }
select { appearance: none; display: block; width: 100%; height: 19px; padding: 0 3px; border: 1px solid #adadad; border-radius: 0; background: #e1e1e1; color: #111; font: inherit; }
.define { display: block; width: 56px; margin: 9px auto 0; }
.dialog footer { display: flex; justify-content: flex-end; gap: 7px; padding: 7px 6px; }
.dialog .ok { border: 2px solid #0078d7; }

/* callouts and torn edge */
.arrows { position: absolute; inset: 0; width: 100%; height: 100%; pointer-events: none; }
.tear { position: absolute; pointer-events: none; }
.top { top: 0; left: 0; width: 100%; height: 10px; }
.bot { bottom: 2px; left: 0; width: 100%; height: 10px; transform: scaleY(-1); box-shadow: 0 -3px #fff; }
.left { left: 0; top: 0; width: 10px; height: 100%; }
.right { right: 2px; top: 0; width: 10px; height: 100%; transform: scaleX(-1); box-shadow: -2px 0 #fff; }
```

FILE: drawing.js
```js
const NS = "http://www.w3.org/2000/svg";
const sheet = document.getElementById("sheet");

function add(tag, attrs, text) {
  const el = document.createElementNS(NS, tag);
  for (const k in attrs) el.setAttribute(k, attrs[k]);
  if (text !== undefined) el.textContent = text;
  sheet.appendChild(el);
}

// zone numbers down the left margin
for (let n = 1; n <= 20; n++) {
  add("text", { class: "t7 white", x: 137, y: Math.round(115 + n * 28.6), "text-anchor": "end" }, n);
}

const colour = { r: "red", c: "cyan", w: "white" };
const termX = n => Math.round(173 + n * 14.28);

for (let n = 1; n <= 23; n++) {
  for (const y of [643, 650]) add("text", { class: "t7 magenta", x: termX(n), y, "text-anchor": "middle" }, n);
}

// vertical leads: terminal, top end
[[1, 594], [2, 608], [3, 608], [4, 594], [5, 608], [6, 608], [7, 608], [8, 608], [9, 608], [11, 608], [13, 608], [17, 608], [18, 608], [20, 608], [21, 608], [22, 608]].forEach(([n, y]) => {
  add("path", { class: "w", d: `M${termX(n)} 637V${y}` });
  add("path", { class: "white", d: `M${termX(n) - 2} ${y + 3}h4l-2-4z` });
});
[1, 2, 3, 4, 5, 6, 7, 8, 9, 10, 11, 12, 13, 14, 16, 17, 18, 19, 20, 21, 22].forEach(n => {
  add("path", { class: "w", d: `M${termX(n)} 651V680` });
  add("path", { class: "white", d: `M${termX(n) - 2} 678h4l-2 4z` });
});

// rotated labels: x, lower end, colour, text
[
  [184, 634, "r", "RISN1"], [184, 616, "c", "1-1B"], [199, 633, "r", "KISN1"], [199, 618, "c", "17-1"],
  [213, 637, "r", "REMVSB"], [213, 611, "w", "to 10-2"], [218, 632, "c", "17-1A"],
  [229, 636, "r", "GEREW1-B1"], [227, 613, "c", "22-1F"], [230, 593, "w", "to 28-1"],
  [239, 634, "r", "TERB"], [244, 634, "w", "from 9-1"], [244, 611, "c", "9-1"],
  [256, 634, "r", "WIVAR"], [256, 618, "c", "17-1"], [263, 617, "w", "to 35-1"],
  [266, 632, "c", "35-24"], [271, 632, "r", "KP1"], [271, 620, "w", "from 65-2"],
  [280, 633, "c", "17-1C"], [286, 636, "r", "GEREPS-A2"], [285, 608, "w", "to 33-1"],
  [294, 627, "c", "17-1D"], [300, 635, "r", "ADAPTER21"], [300, 607, "w", "to 34-1"],
  [322, 634, "c", "27-1E"], [328, 635, "r", "ADAPTER22"], [326, 608, "w", "to 36-1"],
  [350, 635, "c", "36-1A"], [356, 635, "r", "TERB13"], [356, 612, "w", "from 39-1"],
  [408, 635, "c", "28-1G"], [414, 635, "r", "INFS"], [413, 611, "w", "to 34-1"],
  [424, 635, "c", "28-1H"], [429, 635, "r", "IRIS"], [428, 621, "w", "to 33-1"],
  [450, 626, "c", "28-1"], [456, 636, "r", "GARVALARN"], [470, 616, "c", "71-3"], [471, 635, "r", "FBCAD"],
  [483, 616, "c", "71-3"], [485, 635, "r", "FBCAD"], [495, 626, "c", "77-3"], [501, 635, "r", "FBCAD"], [501, 611, "w", "to 31-1"],
  [178, 675, "w", "from 1-1"], [184, 679, "r", "TERI"], [184, 666, "c", "1-1B"],
  [193, 673, "r", "LIVARD"], [198, 676, "w", "to 33-2"], [204, 671, "c", "17-1"],
  [207, 682, "r", "GEREPS-A2"], [213, 680, "w", "to 27-1"], [218, 686, "c", "17-1A"],
  [225, 687, "w", "from 22-1"], [229, 667, "r", "TERN"], [234, 680, "c", "22-1F"],
  [240, 685, "w", "to 49-2"], [244, 669, "r", "TERN2"], [246, 688, "c", "9-1"],
  [257, 684, "w", "from 61-2"], [251, 669, "r", "SPILZ"], [262, 672, "c", "17-1"],
  [267, 690, "w", "to 20-1"], [272, 682, "r", "GEREP1-N2"], [276, 690, "c", "22-2B"],
  [283, 688, "w", "to 33-1"], [287, 674, "r", "GNTRNE"], [291, 687, "c", "17-1C"],
  [298, 690, "w", "to 35-1"], [302, 682, "r", "ADAPTER21"], [306, 690, "c", "17-1D"],
  [310, 683, "r", "PILI"], [316, 690, "w", "from 51-3"], [321, 668, "c", "61-1"],
  [327, 690, "w", "to 27-1"], [331, 682, "r", "ADAPTER22"], [335, 690, "c", "27-1E"],
  [341, 684, "r", "GARVWALARN"], [347, 675, "c", "17-1B"],
  [354, 690, "w", "to 27-1"], [358, 669, "r", "PASIN"], [362, 690, "c", "27-1F"],
  [370, 687, "w", "from 35-1"], [374, 669, "r", "SOLS1"], [379, 688, "c", "38-1H"],
  [395, 685, "w", "to 46-3"], [399, 681, "r", "CONTRKER"], [404, 683, "c", "28-1"],
  [410, 685, "w", "to 25-1"], [414, 674, "r", "UCRJOG"], [419, 684, "c", "28-1G"],
  [425, 687, "w", "to 39-1"], [429, 674, "r", "UCRJOG"], [434, 684, "c", "28-1H"],
  [438, 671, "w", "to 26-1"], [442, 666, "r", "IRIS"], [446, 680, "c", "28-1"],
  [453, 682, "w", "from 35-1"], [457, 668, "r", "ERXG"], [461, 690, "c", "28-1"],
  [468, 690, "w", "from 71-4"], [472, 676, "r", "GART3-1"], [476, 690, "c", "71-3"],
  [481, 678, "w", "from 71-3"], [485, 687, "r", "GERET1-2"], [490, 679, "c", "71-3"],
  [495, 675, "r", "GERET"], [501, 684, "w", "from 73-1"]
].forEach(([x, y, c, s]) => {
  add("text", { class: `${c === "r" ? "t5" : "t6"} ${colour[c]}`, transform: `translate(${x} ${y}) rotate(-90)` }, s);
});
```
